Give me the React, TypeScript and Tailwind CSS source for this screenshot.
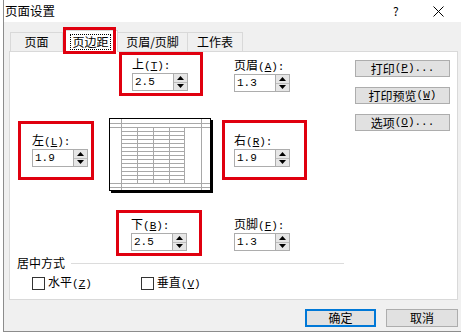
import React from "react";

const MONO = "font-['Liberation_Mono','Noto_Sans_CJK_SC',monospace] text-[11px]";

function Acc({ pre, k, post = "" }: { pre: string; k: string; post?: string }) {
  return (
    <span className="whitespace-nowrap">
      {pre}
      <span className={MONO}>
        (<span className="underline underline-offset-[1px]">{k}</span>){post}
      </span>
    </span>
  );
}

function Spin({ value }: { value: string }) {
  return (
    <div className="flex h-[18px] w-[56px] items-stretch border border-[#adadad] bg-white">
      <div className={`flex-1 pl-[2px] leading-[16px] text-black ${MONO}`}>{value}</div>
      <div className="my-[0px] flex w-[14px] flex-col border-l border-[#adadad] bg-[#e6e6e6]">
        <div className="flex flex-1 items-center justify-center border-b border-[#bdbdbd]">
          <svg width="7" height="4" viewBox="0 0 7 4">
            <path d="M3.5 0 L7 4 L0 4 Z" fill="#000" />
          </svg>
        </div>
        <div className="flex flex-1 items-center justify-center">
          <svg width="7" height="4" viewBox="0 0 7 4">
            <path d="M0 0 L7 0 L3.5 4 Z" fill="#000" />
          </svg>
        </div>
      </div>
    </div>
  );
}

function Field({ label, value }: { label: React.ReactNode; value: string }) {
  return (
    <div>
      <div className="h-[18px] text-[12px] leading-[18px] text-black">{label}</div>
      <Spin value={value} />
    </div>
  );
}

function Preview() {
  const rows: number[] = [];
  for (let y = 9; y <= 65; y += 4) rows.push(y);
  const cols = [28, 44, 60, 75];
  return (
    <svg width="105" height="77" viewBox="0 0 105 77">
      <rect x="2" y="2" width="102" height="73" fill="#000" />
      <rect x="0.5" y="0.5" width="101" height="72" fill="#fff" stroke="#000" />
      <g stroke="#a8a8a8" strokeWidth="1" shapeRendering="crispEdges">
        <line x1="12.5" y1="1" x2="12.5" y2="72" />
        <line x1="92.5" y1="1" x2="92.5" y2="72" />
        <line x1="1" y1="5.5" x2="101" y2="5.5" />
        <line x1="1" y1="9.5" x2="101" y2="9.5" />
        <line x1="1" y1="65.5" x2="101" y2="65.5" />
        <line x1="1" y1="69.5" x2="101" y2="69.5" />
        {rows.map((y) => (
          <line key={y} x1="12" y1={y + 0.5} x2="75" y2={y + 0.5} />
        ))}
        {cols.map((x) => (
          <line key={x} x1={x + 0.5} y1="9" x2={x + 0.5} y2="66" />
        ))}
      </g>
    </svg>
  );
}

function Btn({ children, w = "w-[95px]", h = "h-[17px]", def = false }: { children: React.ReactNode; w?: string; h?: string; def?: boolean }) {
  return (
    <div
      className={`${w} ${h} flex items-center justify-center bg-[#e1e1e1] text-[12px] text-black ${
        def ? "border-2 border-[#0078d7]" : "border border-[#adadad]"
      }`}
    >
      {children}
    </div>
  );
}

function Check({ children }: { children: React.ReactNode }) {
  return (
    <div className="flex items-center">
      <div className="h-[13px] w-[13px] border border-[#333] bg-white" />
      <div className="ml-[3px] text-[12px] leading-[14px]">{children}</div>
    </div>
  );
}

export default function App() {
  return (
    <div className="relative h-[334px] w-[461px] overflow-hidden bg-white font-['Noto_Sans_CJK_SC','Noto_Sans',sans-serif] text-black">
      <div className="ml-[3px] flex h-[332px] flex-col border-b border-l border-[#8c8c8c]">
        {/* title bar */}
        <div className="relative flex h-[22px] items-center bg-white pl-[1px]">
          <span className="text-[12.5px] leading-[14px]">页面设置</span>
          <span className="absolute left-[389px] top-[3px] text-[12px] leading-[16px]">?</span>
          <svg className="absolute left-[429px] top-[6px]" width="11" height="11" viewBox="0 0 11 11">
            <path d="M0.5 0.5 L10.5 10.5 M10.5 0.5 L0.5 10.5" stroke="#000" strokeWidth="1" />
          </svg>
        </div>
        {/* body */}
        <div className="flex flex-1 flex-col bg-[#f0f0f0]">
          {/* tabs */}
          <div className="relative mt-[10px] flex h-[19px] pl-[6px] text-[12px]">
            <div className="flex w-[53px] items-center justify-center border-l border-r border-t border-[#d9d9d9] bg-[#f0f0f0]">页面</div>
            <div className="z-10 -mt-[2px] flex h-[22px] w-[55px] items-center justify-center border-l border-r border-t border-[#d9d9d9] bg-white">
              <span className="border border-dotted border-black px-[1px] leading-[14px]">页边距</span>
            </div>
            <div className="flex w-[70px] items-center justify-center border-r border-t border-[#d9d9d9] bg-[#f0f0f0]">页眉/页脚</div>
            <div className="flex w-[55px] items-center justify-center border-r border-t border-[#d9d9d9] bg-[#f0f0f0]">工作表</div>
            <div className="absolute left-[59px] top-[-5px] z-20 h-[27px] w-[53px] border-[3px] border-[#e0000f]" />
          </div>
          {/* panel */}
          <div className="ml-[5px] flex h-[249px] w-[449px] border border-[#d9d9d9] bg-white">
            <div className="flex w-[335px] flex-col">
              {/* row 1 */}
              <div className="flex h-[44px] items-start">
                <div className="ml-[109px] h-[44px] w-[84px] border-[3px] border-[#e0000f] pl-[10px]">
                  <Field label={<Acc pre="上" k="T" post=":" />} value="2.5" />
                </div>
                <div className="ml-[31px] mt-[4px]">
                  <Field label={<Acc pre="页眉" k="A" post=":" />} value="1.3" />
                </div>
              </div>
              {/* row 2 */}
              <div className="mt-[22px] flex items-start">
                <div className="ml-[8px] mt-[3px] h-[59px] w-[76px] border-[3px] border-[#e0000f] pl-[11px] pt-[7px]">
                  <Field label={<Acc pre="左" k="L" post=":" />} value="1.9" />
                </div>
                <div className="ml-[15px]">
                  <Preview />
                </div>
                <div className="ml-[8px] mt-[2px] h-[60px] w-[85px] border-[3px] border-[#e0000f] pl-[9px] pt-[8px]">
                  <Field label={<Acc pre="右" k="R" post=":" />} value="1.9" />
                </div>
              </div>
              {/* row 3 */}
              <div className="mt-[15px] flex items-start">
                <div className="ml-[106px] h-[46px] w-[86px] border-[3px] border-[#e0000f] pl-[12px] pt-[2px]">
                  <Field label={<Acc pre="下" k="B" post=":" />} value="2.5" />
                </div>
                <div className="ml-[32px] mt-[5px]">
                  <Field label={<Acc pre="页脚" k="F" post=":" />} value="1.3" />
                </div>
              </div>
              {/* group */}
              <div className="flex h-[14px] w-[334px] items-center">
                <span className="ml-[7px] text-[12px] leading-[14px]">居中方式</span>
                <div className="ml-[6px] h-px flex-1 bg-[#dcdcdc]" />
              </div>
              <div className="mt-[5px] flex">
                <div className="ml-[22px]">
                  <Check>
                    <Acc pre="水平" k="Z" />
                  </Check>
                </div>
                <div className="ml-[49px]">
                  <Check>
                    <Acc pre="垂直" k="V" />
                  </Check>
                </div>
              </div>
            </div>
            <div className="ml-[10px] flex flex-col gap-[10px] pt-[8px]">
              <Btn>
                打印<span className={MONO}>(<span className="underline">P</span>)...</span>
              </Btn>
              <Btn>
                打印预览<span className={MONO}>(<span className="underline">W</span>)</span>
              </Btn>
              <Btn>
                选项<span className={MONO}>(<span className="underline">O</span>)...</span>
              </Btn>
            </div>
          </div>
          {/* bottom buttons */}
          <div className="mt-[9px] flex justify-end gap-[10px] pr-[3px]">
            <Btn w="w-[71px]" h="h-[18px]" def>
              确定
            </Btn>
            <Btn w="w-[72px]" h="h-[18px]">
              取消
            </Btn>
          </div>
        </div>
      </div>
    </div>
  );
}
